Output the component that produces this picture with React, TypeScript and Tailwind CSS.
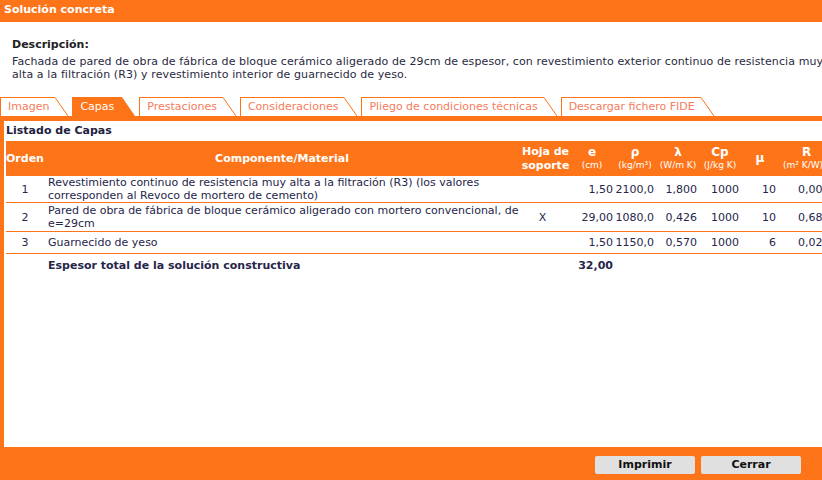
import React from "react";

const ORANGE = "#fd7419";

type Row = {
  n: string;
  mat: React.ReactNode;
  hoja: string;
  e: string;
  rho: string;
  lam: string;
  cp: string;
  mu: string;
  r: string;
  h: string;
};

const rows: Row[] = [
  {
    n: "1",
    mat: (
      <>
        Revestimiento continuo de resistencia muy alta a la filtración (R3) (los valores
        <br />
        corresponden al Revoco de mortero de cemento)
      </>
    ),
    hoja: "",
    e: "1,50",
    rho: "2100,0",
    lam: "1,800",
    cp: "1000",
    mu: "10",
    r: "0,001",
    h: "h-[27px]",
  },
  {
    n: "2",
    mat: (
      <>
        Pared de obra de fábrica de bloque cerámico aligerado con mortero convencional, de
        <br />
        e=29cm
      </>
    ),
    hoja: "X",
    e: "29,00",
    rho: "1080,0",
    lam: "0,426",
    cp: "1000",
    mu: "10",
    r: "0,681",
    h: "h-[29px]",
  },
  {
    n: "3",
    mat: "Guarnecido de yeso",
    hoja: "",
    e: "1,50",
    rho: "1150,0",
    lam: "0,570",
    cp: "1000",
    mu: "6",
    r: "0,026",
    h: "h-[22px]",
  },
];

function Tab({ label, active }: { label: string; active?: boolean }) {
  if (active) {
    return (
      <div className="flex items-end">
        <div className="h-[19px] bg-[#fd7419] pl-[8px] pr-[8px] text-[11px] leading-[19px] text-white">
          {label}
        </div>
        <svg width="13" height="19" viewBox="0 0 13 19" className="block">
          <polygon points="0,0 13,19 0,19" fill={ORANGE} />
        </svg>
      </div>
    );
  }
  return (
    <div className="flex items-end">
      <div className="h-[19px] border-l border-t border-[#fd7419] pl-[7px] pr-[6px] text-[11px] leading-[18px] text-[#f57c5c]">
        {label}
      </div>
      <svg width="13" height="19" viewBox="0 0 13 19" className="block">
        <line x1="0" y1="0.5" x2="13" y2="19" stroke={ORANGE} strokeWidth="1" />
      </svg>
    </div>
  );
}

function Head({ sym, unit }: { sym: string; unit: string }) {
  return (
    <div className="flex flex-col items-center leading-[13px]">
      <span className="text-[12px] font-bold">{sym}</span>
      <span className="text-[9px] font-normal">{unit}</span>
    </div>
  );
}

// row separator: orange 1px line under every cell
const cell = "[border-bottom:1px_solid_#fd7419]";

export default function App() {
  return (
    <div
      className="w-[822px] h-[480px] overflow-hidden bg-[#fd7419] flex flex-col text-[#26264a]"
      style={{ fontFamily: '"DejaVu Sans", Verdana, sans-serif' }}
    >
      {/* Title */}
      <div className="h-[22px] shrink-0 px-[4px] pt-[2px] text-[11px] font-bold leading-[15px] text-white">
        Solución concreta
      </div>

      {/* Description + tabs */}
      <div className="h-[94px] shrink-0 bg-white flex flex-col w-[900px]">
        <div className="pl-[12px] pt-[16px] text-[11px]">
          <div className="font-bold leading-[14px] text-[#222]">Descripción:</div>
          <div className="leading-[13px] whitespace-nowrap tracking-[0.1px] text-[#2a2a40] mt-[3px]">
            Fachada de pared de obra de fábrica de bloque cerámico aligerado de 29cm de espesor, con revestimiento exterior continuo de resistencia muy
            <br />
            alta a la filtración (R3) y revestimiento interior de guarnecido de yeso.
          </div>
        </div>
        <div className="mt-auto flex gap-[4px] whitespace-nowrap">
          <Tab label="Imagen" />
          <Tab label="Capas" active />
          <Tab label="Prestaciones" />
          <Tab label="Consideraciones" />
          <Tab label="Pliego de condiciones técnicas" />
          <Tab label="Descargar fichero FIDE" />
        </div>
      </div>

      {/* Panel */}
      <div className="mt-[5px] ml-[4px] h-[326px] shrink-0 bg-white overflow-hidden">
        <div className="px-[2px] pt-[3px] h-[20px] text-[11px] font-bold leading-[14px] text-[#22223f]">
          Listado de Capas
        </div>
        <table className="ml-[2px] w-[850px] table-fixed border-separate border-spacing-0 text-[11px] leading-[13px]">
          <colgroup>
            <col className="w-[38px]" />
            <col className="w-[476px]" />
            <col className="w-[51px]" />
            <col className="w-[42px]" />
            <col className="w-[44px]" />
            <col className="w-[42px]" />
            <col className="w-[42px]" />
            <col className="w-[42px]" />
            <col className="w-[73px]" />
          </colgroup>
          <thead>
            <tr className="h-[35px] bg-[#fd7419] text-white">
              <th className="text-left text-[11px] font-bold">Orden</th>
              <th className="text-center text-[11px] font-bold">Componente/Material</th>
              <th className="text-center text-[11px] font-bold leading-[14px]">
                Hoja de
                <br />
                soporte
              </th>
              <th>
                <Head sym="e" unit="(cm)" />
              </th>
              <th>
                <Head sym="ρ" unit="(kg/m³)" />
              </th>
              <th>
                <Head sym="λ" unit="(W/m K)" />
              </th>
              <th>
                <Head sym="Cp" unit="(J/kg K)" />
              </th>
              <th className="text-[12px] font-bold pr-[4px]">μ</th>
              <th className="text-left">
                <div className="flex flex-col items-start leading-[13px]">
                  <span className="text-[12px] font-bold pl-[19px]">R</span>
                  <span className="text-[9px] font-normal">(m² K/W)</span>
                </div>
              </th>
            </tr>
          </thead>
          <tbody>
            {rows.map((r) => (
              <tr key={r.n} className={`${r.h} align-middle`}>
                <td className={`${cell} text-center`}>{r.n}</td>
                <td className={`${cell} pl-[4px]`}>{r.mat}</td>
                <td className={`${cell} text-center pr-[6px]`}>{r.hoja}</td>
                <td className={`${cell} text-right`}>{r.e}</td>
                <td className={`${cell} text-right pr-[3px]`}>{r.rho}</td>
                <td className={`${cell} text-right pr-[2px]`}>{r.lam}</td>
                <td className={`${cell} text-right pr-[2px]`}>{r.cp}</td>
                <td className={`${cell} text-right pr-[7px]`}>{r.mu}</td>
                <td className={`${cell} text-left pl-[15px]`}>{r.r}</td>
              </tr>
            ))}
            <tr className="h-[22px] font-bold">
              <td />
              <td className="pl-[4px]">Espesor total de la solución constructiva</td>
              <td />
              <td className="text-right">32,00</td>
              <td />
              <td />
              <td />
              <td />
              <td />
            </tr>
          </tbody>
        </table>
      </div>

      {/* Footer */}
      <div className="flex-1 flex items-start justify-end gap-[6px] pt-[9px] pr-[21px]">
        <button className="w-[100px] h-[18px] rounded-[2px] bg-[#e0e0e0] text-[11px] font-bold text-[#111]">
          Imprimir
        </button>
        <button className="w-[100px] h-[18px] rounded-[2px] bg-[#e0e0e0] text-[11px] font-bold text-[#111]">
          Cerrar
        </button>
      </div>
    </div>
  );
}
